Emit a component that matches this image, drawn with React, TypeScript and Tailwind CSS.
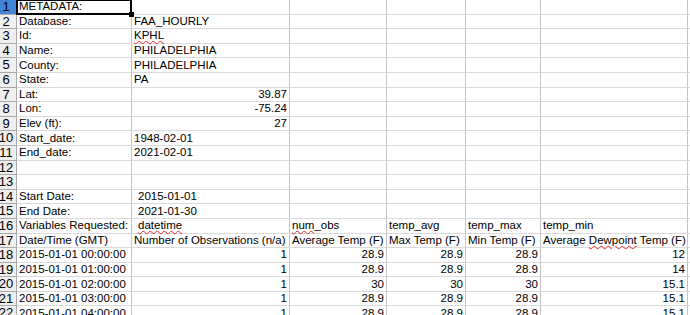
import React from 'react';

type Cell = { t?: string; right?: boolean; wavy?: string; pad?: boolean };

const blank: Cell = {};

const rows: Cell[][] = [
  [{ t: 'METADATA:' }],
  [{ t: 'Database:' }, { t: 'FAA_HOURLY' }],
  [{ t: 'Id:' }, { t: 'KPHL', wavy: 'KPHL' }],
  [{ t: 'Name:' }, { t: 'PHILADELPHIA' }],
  [{ t: 'County:' }, { t: 'PHILADELPHIA' }],
  [{ t: 'State:' }, { t: 'PA' }],
  [{ t: 'Lat:' }, { t: '39.87', right: true }],
  [{ t: 'Lon:' }, { t: '-75.24', right: true }],
  [{ t: 'Elev (ft):' }, { t: '27', right: true }],
  [{ t: 'Start_date:' }, { t: '1948-02-01' }],
  [{ t: 'End_date:' }, { t: '2021-02-01' }],
  [],
  [],
  [{ t: 'Start Date:' }, { t: '2015-01-01', pad: true }],
  [{ t: 'End Date:' }, { t: '2021-01-30', pad: true }],
  [
    { t: 'Variables Requested:' },
    { t: 'datetime', wavy: 'datetime', pad: true },
    { t: 'num_obs', wavy: 'num' },
    { t: 'temp_avg' },
    { t: 'temp_max' },
    { t: 'temp_min' },
  ],
  [
    { t: 'Date/Time (GMT)' },
    { t: 'Number of Observations (n/a)' },
    { t: 'Average Temp (F)' },
    { t: 'Max Temp (F)' },
    { t: 'Min Temp (F)' },
    { t: 'Average Dewpoint Temp (F)', wavy: 'Dewpoint' },
  ],
  ...[
    ['00', '28.9', '12'],
    ['01', '28.9', '14'],
    ['02', '30', '15.1'],
    ['03', '28.9', '15.1'],
    ['04', '28.9', '15.1'],
  ].map(([h, t, d]) => [
    { t: `2015-01-01 ${h}:00:00` },
    { t: '1', right: true },
    { t, right: true },
    { t, right: true },
    { t, right: true },
    { t: d, right: true },
  ]),
];

// text of a cell, with a spell-checked word marked by a red wavy line
const Text = ({ c }: { c: Cell }) => {
  if (!c.t) return null;
  if (!c.wavy) return <span>{c.t}</span>;
  const i = c.t.indexOf(c.wavy);
  return (
    <span className="whitespace-pre">
      {c.t.slice(0, i)}
      <span className="underline decoration-wavy decoration-[#e8262b] decoration-[1px] underline-offset-[1px]">
        {c.wavy}
      </span>
      {c.t.slice(i + c.wavy.length)}
    </span>
  );
};

const App: React.FC = () => {
  return (
    <div
      className="w-[690px] h-[315px] overflow-hidden bg-white text-[11.5px] text-black"
      style={{ fontFamily: '"Liberation Sans", Arial, sans-serif' }}
    >
      {rows.map((row, r) => (
        <div
          key={r}
          className="grid grid-cols-[17px_115px_158px_97px_79px_75px_147px_40px] h-[14.6px]"
        >
          {/* Row header */}
          <div
            className={`overflow-hidden border-r border-b border-[#a9a9a9] leading-[14px] ${
              r === 0 ? 'bg-[#3f86d8]' : 'bg-[#efefef]'
            }`}
          >
            <div className="w-[22px] -ml-[5px] text-center text-[13px]">{r + 1}</div>
          </div>

          {[0, 1, 2, 3, 4, 5, 6].map((ci) => {
            const c = row[ci] ?? blank;
            const open = (r === 0 && ci === 0) || !!c.wavy;
            return (
              <div
                key={ci}
                className={`relative flex items-center whitespace-nowrap border-b border-b-[#dadada] border-r border-r-[#c3c3c3] px-[2px] leading-[13px] ${
                  c.right ? 'justify-end' : ''
                } ${c.pad ? 'pl-[6px]' : ''} ${open ? 'overflow-visible z-10' : 'overflow-hidden'}`}
              >
                <Text c={c} />
                {r === 0 && ci === 0 && (
                  <div className="absolute -left-px -top-px -right-px -bottom-px border-2 border-black pointer-events-none">
                    <div className="absolute -right-[4px] -bottom-[4px] w-[5px] h-[5px] bg-black" />
                  </div>
                )}
              </div>
            );
          })}
        </div>
      ))}
    </div>
  );
};

export default App;
